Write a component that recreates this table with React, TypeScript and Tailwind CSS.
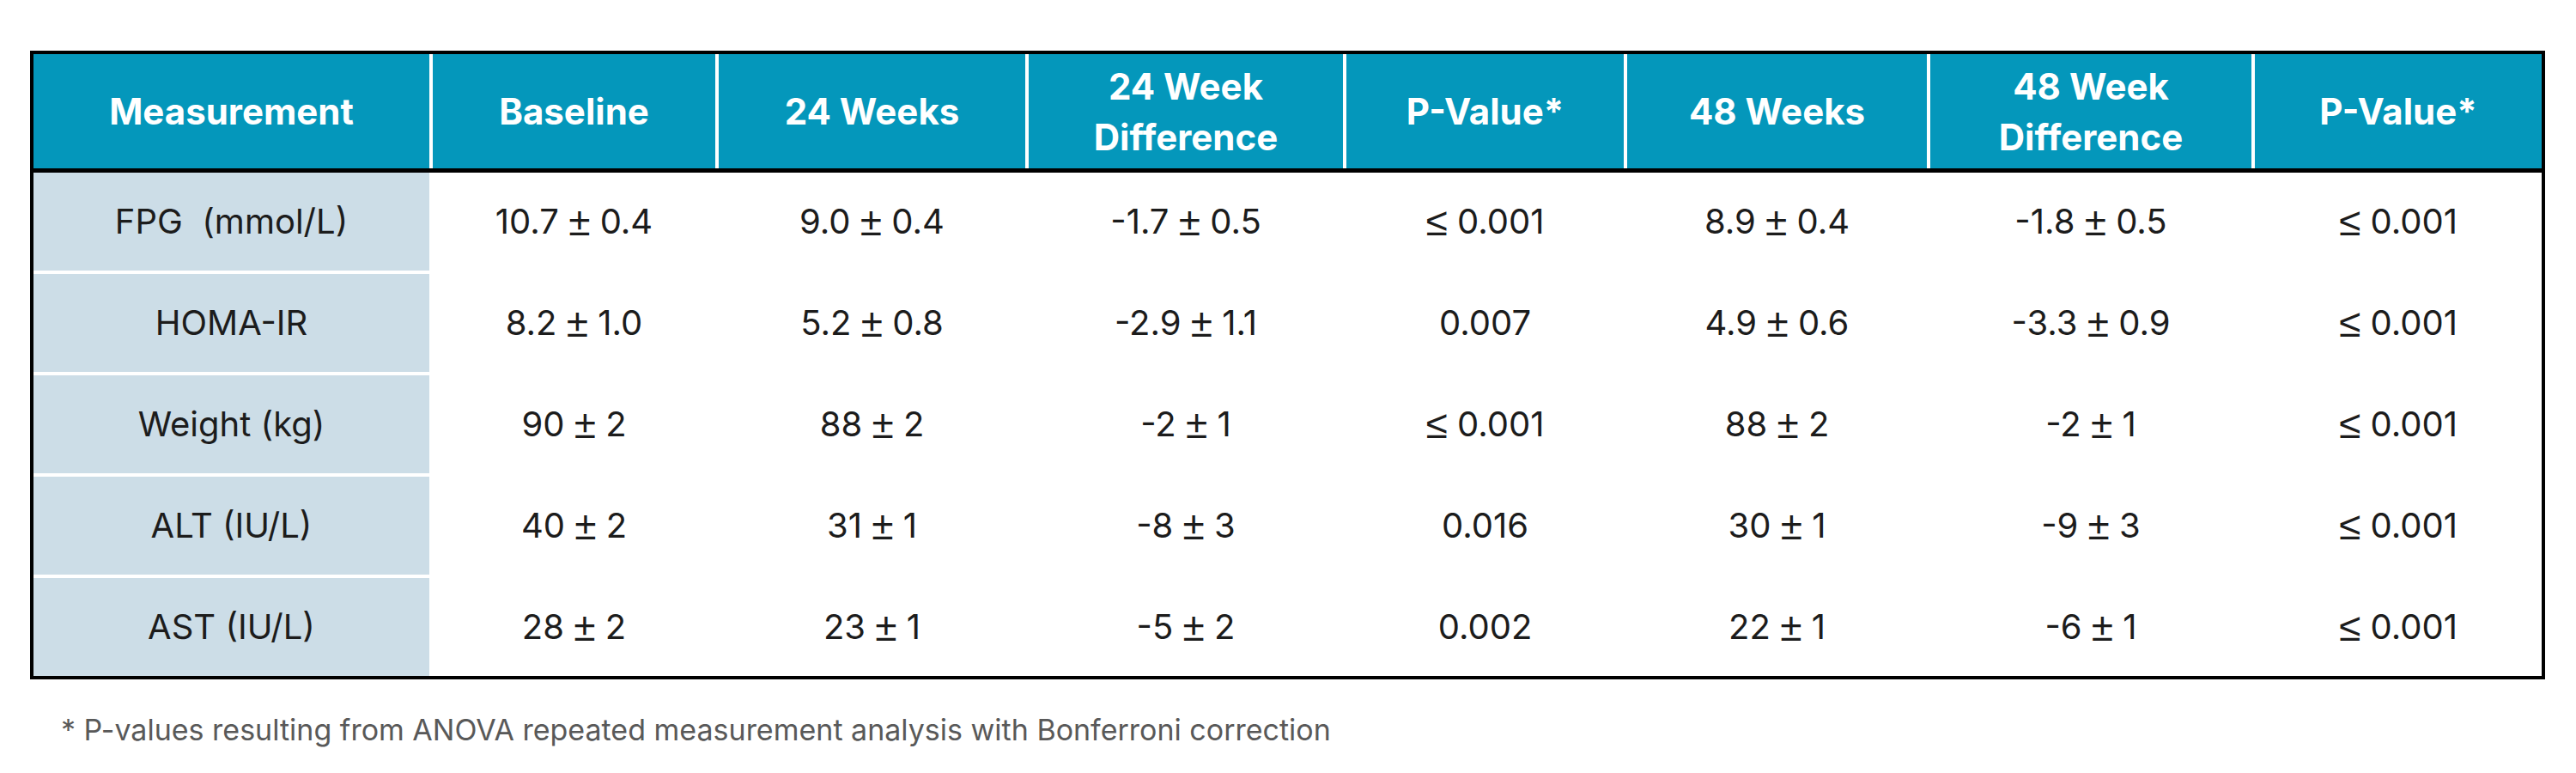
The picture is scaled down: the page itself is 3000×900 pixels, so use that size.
const headers = [
  "Measurement",
  "Baseline",
  "24 Weeks",
  "24 Week\nDifference",
  "P-Value*",
  "48 Weeks",
  "48 Week\nDifference",
  "P-Value*",
];

const rows: string[][] = [
  ["FPG  (mmol/L)", "10.7 ± 0.4", "9.0 ± 0.4", "-1.7 ± 0.5", "≤ 0.001", "8.9 ± 0.4", "-1.8 ± 0.5", "≤ 0.001"],
  ["HOMA-IR", "8.2 ± 1.0", "5.2 ± 0.8", "-2.9 ± 1.1", "0.007", "4.9 ± 0.6", "-3.3 ± 0.9", "≤ 0.001"],
  ["Weight (kg)", "90 ± 2", "88 ± 2", "-2 ± 1", "≤ 0.001", "88 ± 2", "-2 ± 1", "≤ 0.001"],
  ["ALT (IU/L)", "40 ± 2", "31 ± 1", "-8 ± 3", "0.016", "30 ± 1", "-9 ± 3", "≤ 0.001"],
  ["AST (IU/L)", "28 ± 2", "23 ± 1", "-5 ± 2", "0.002", "22 ± 1", "-6 ± 1", "≤ 0.001"],
];

// fixed column widths taken from the slide, 4px white gutters between them
const grid = "grid grid-cols-[461px_329px_357px_366px_323px_349px_374px_334px] gap-x-[4px]";

// the slide's ± and ≤ are drawn big and heavy, Inter's are tiny
function Value({ text }: { text: string }) {
  return (
    <>
      {text.split(/([±≤])/).map((part, i) =>
        part === "±" || part === "≤" ? (
          <span key={i} className="font-['Liberation_Sans',sans-serif] text-[46px] leading-[40px]">
            {part}
          </span>
        ) : (
          <span key={i}>{part}</span>
        ),
      )}
    </>
  );
}

export default function App() {
  return (
    <div className="h-[900px] w-[3000px] bg-white pl-[35px] pt-[59px] font-['Inter','Noto_Sans',sans-serif]">
      <div className="w-[2929px] border-4 border-black">
        {/* Header */}
        <div className={`${grid} border-b-[5px] border-black bg-white`}>
          {headers.map((h, i) => (
            <div
              key={i}
              className="flex h-[133px] items-center justify-center whitespace-pre-line bg-[#0497bb] text-center text-[42px] font-bold leading-[59px] text-white"
            >
              {h}
            </div>
          ))}
        </div>

        {/* Body */}
        <div className="flex flex-col gap-y-[4px] bg-white">
          {rows.map((row, r) => (
            <div key={r} className={grid}>
              {row.map((cell, c) => (
                <div
                  key={c}
                  className={`flex h-[114px] items-center justify-center whitespace-pre text-[40px] leading-none text-[#1c1c1c] ${
                    c === 0 ? "bg-[#ccdde7]" : "bg-white"
                  }`}
                >
                  <Value text={cell} />
                </div>
              ))}
            </div>
          ))}
        </div>
      </div>

      <p className="mt-[42px] pl-[36px] text-[34px] leading-none text-[#595959]">
        * P-values resulting from ANOVA repeated measurement analysis with Bonferroni correction
      </p>
    </div>
  );
}
